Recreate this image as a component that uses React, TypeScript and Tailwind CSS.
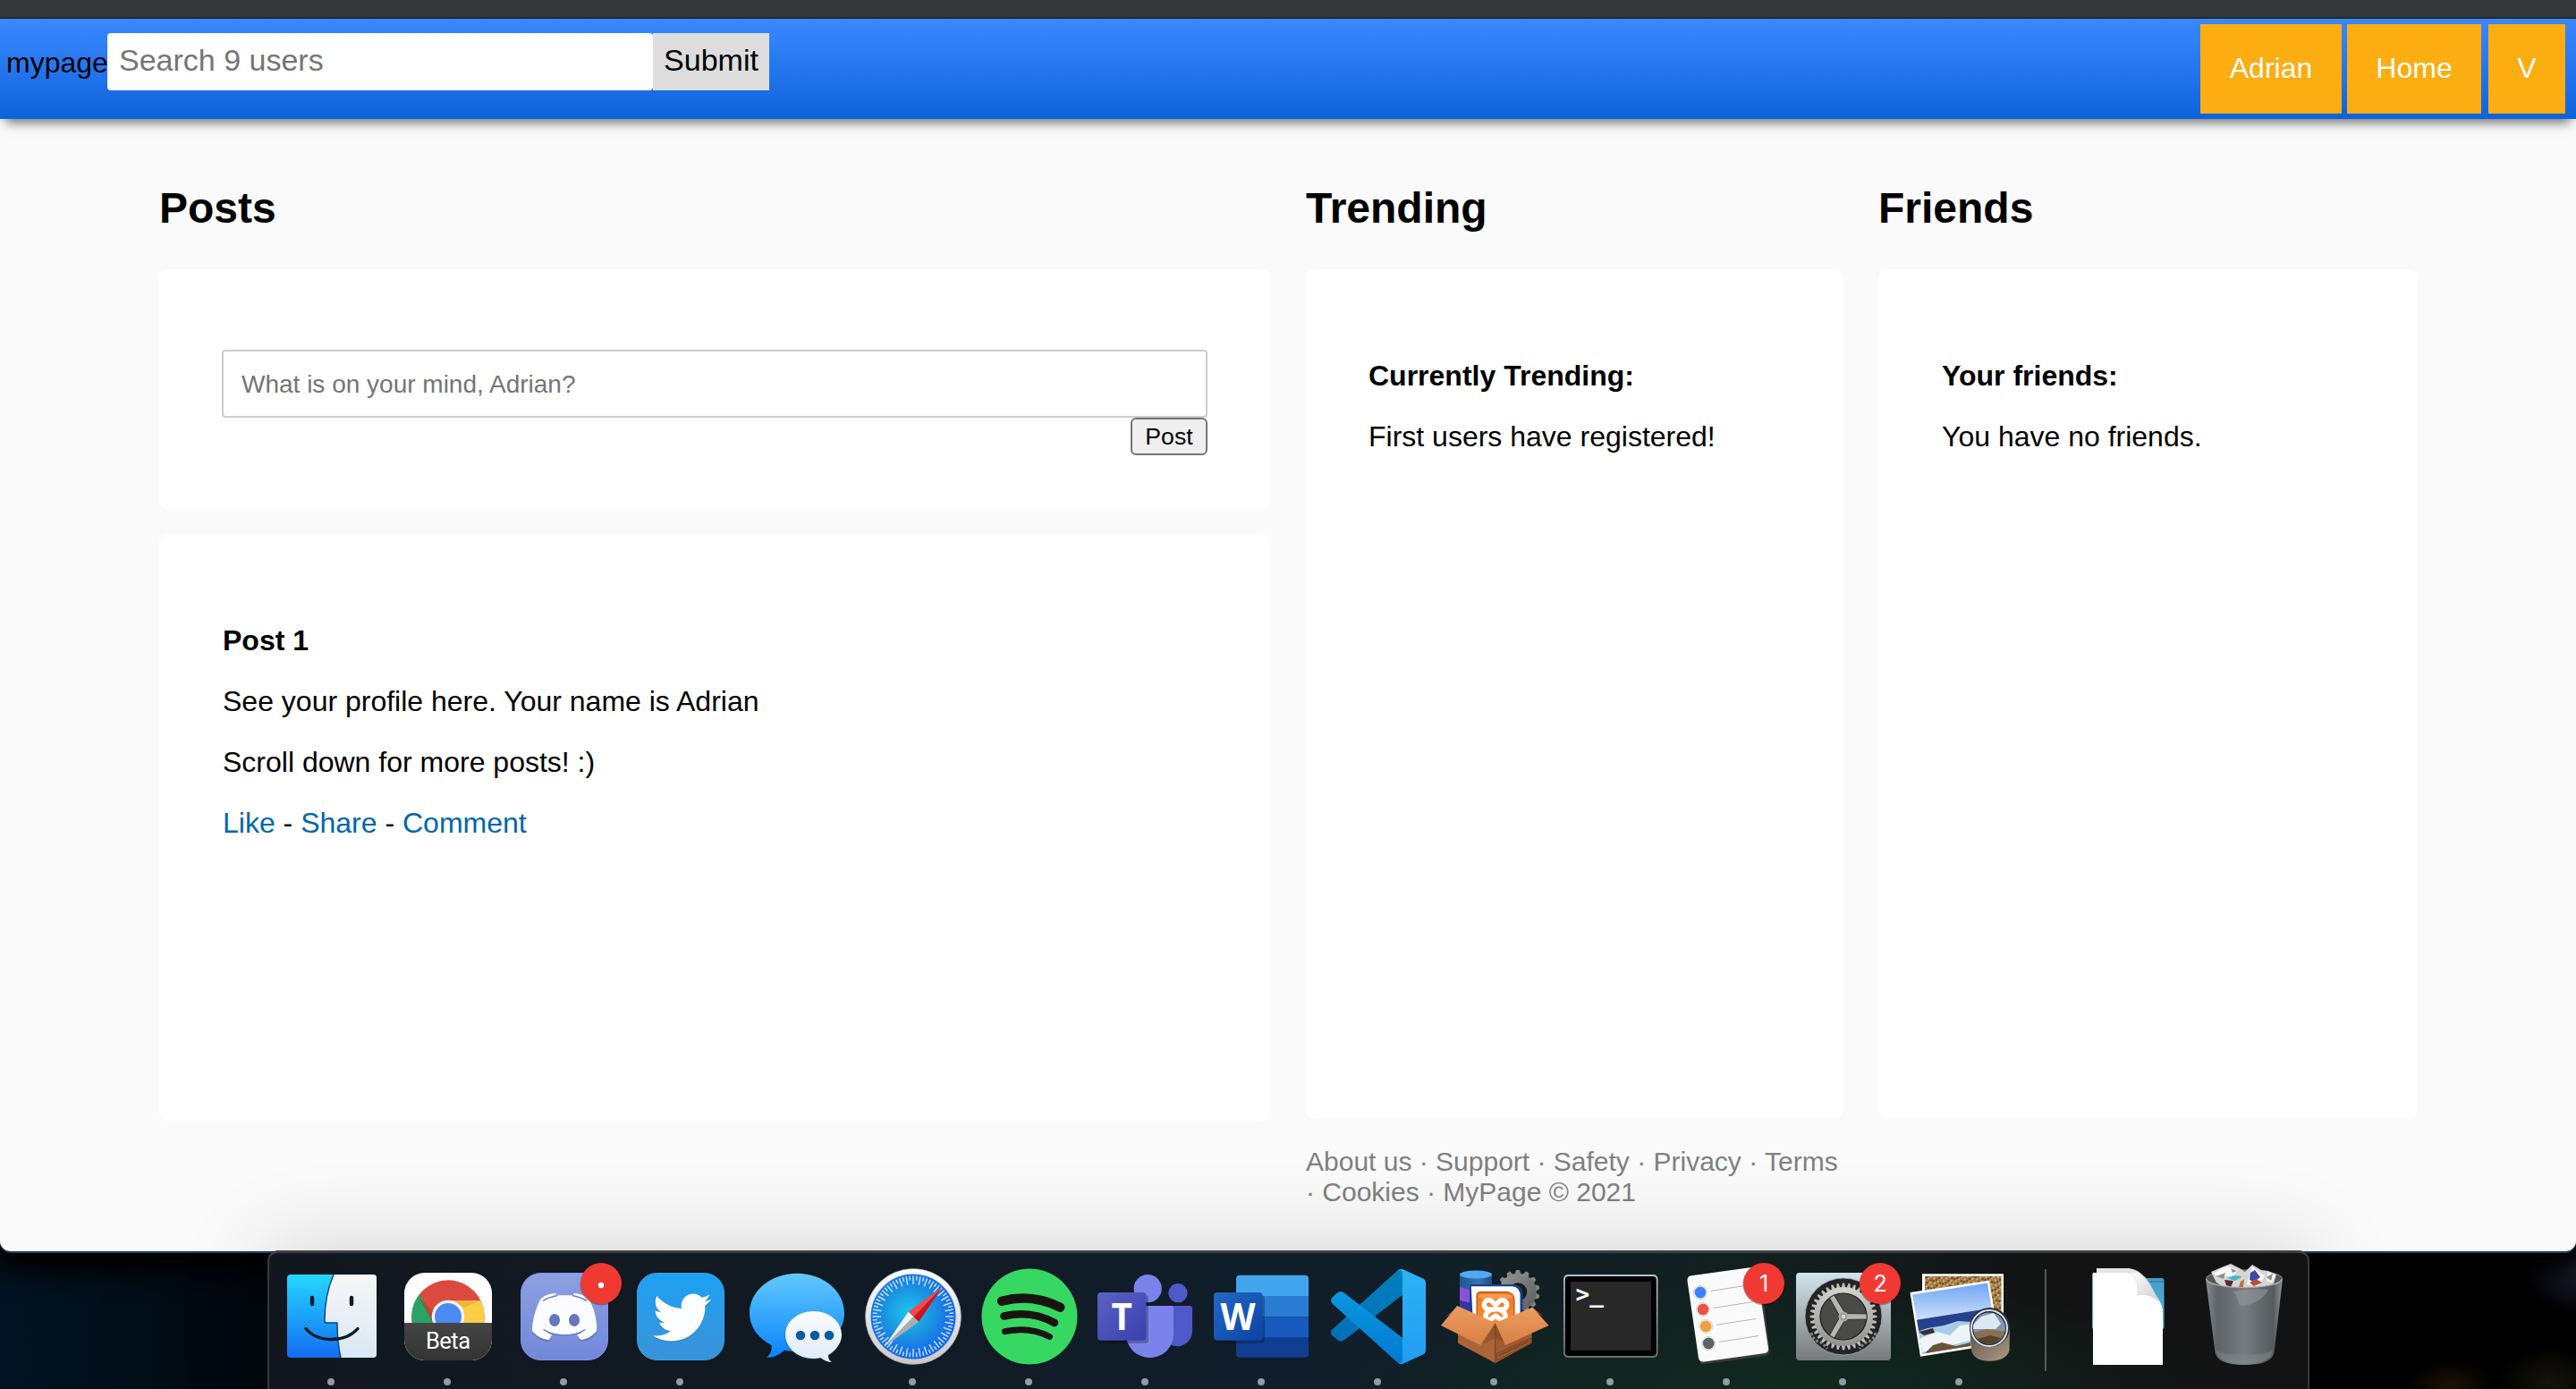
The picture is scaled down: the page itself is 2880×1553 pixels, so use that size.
import type { ReactNode } from "react";
import { FaTwitter } from "react-icons/fa";

const SANS = "font-['Liberation_Sans',Arial,sans-serif]";

function Heading({ children }: { children: ReactNode }) {
  return <h2 className="h-[54px] pt-px text-[48px] leading-[54px] font-bold">{children}</h2>;
}

function Card({ className, children }: { className: string; children: ReactNode }) {
  return <section className={`rounded-[10px] bg-white px-[70px] ${className}`}>{children}</section>;
}

function NavButton({ children, className = "" }: { children: ReactNode; className?: string }) {
  return (
    <a className={`flex h-[100px] items-center justify-center bg-[#fbad12] pb-[2px] text-[32px] leading-9 text-white ${className}`}>
      {children}
    </a>
  );
}

function Header() {
  return (
    <header className="relative z-10 flex h-[112px] shrink-0 items-start justify-between bg-linear-to-b from-[#3988ff] to-[#0b63dc] shadow-[0_10px_12px_-6px_rgba(0,0,0,0.55)]">
      <div className="flex pt-4 pl-[7px]">
        <span className="w-[113px] pt-[15px] text-[32px] leading-9">mypage</span>
        <input
          className="h-16 w-[610px] rounded-[4px] bg-white pr-3 pb-1 pl-[13px] text-[34px] text-black outline-none placeholder:text-[#757575]"
          placeholder="Search 9 users"
        />
        <button className="h-16 w-[130px] bg-[#dddddd] pb-1 text-[34px]">Submit</button>
      </div>
      <nav className="flex pt-[6px] pr-3">
        <NavButton className="mr-[6px] w-[158px]">Adrian</NavButton>
        <NavButton className="mr-2 w-[150px]">Home</NavButton>
        <NavButton className="w-[86px]">V</NavButton>
      </nav>
    </header>
  );
}

function Page() {
  return (
    <main className="flex flex-1 bg-[#fafafa] pt-[72px] pl-[178px] text-[32px] leading-9 text-black">
      <div className="w-[1242px]">
        <Heading>Posts</Heading>
        <Card className="mt-[42px] h-[268px] pt-[90px]">
          <input
            className="block h-[76px] w-[1102px] rounded-[4px] border-2 border-[#cccccc] pt-[2px] pl-5 text-[28px] text-black outline-none placeholder:text-[#757575]"
            placeholder="What is on your mind, Adrian?"
          />
          <button className="ml-auto block h-[42px] w-[86px] rounded-[6px] border-2 border-[#767676] bg-[#efefef] text-[26.67px] leading-[30px]">
            Post
          </button>
        </Card>
        <Card className="mt-7 flex h-[656px] flex-col gap-8 pt-[101px]">
          <h3 className="pl-px font-bold">Post 1</h3>
          <p className="pl-px">See your profile here. Your name is Adrian</p>
          <p className="pl-px">Scroll down for more posts! :)</p>
          <p className="pl-px">
            <a className="text-[#0066ad]">Like</a> - <a className="text-[#0066ad]">Share</a> -{" "}
            <a className="text-[#0066ad]">Comment</a>
          </p>
        </Card>
      </div>
      <div className="ml-10 w-[600px]">
        <Heading>Trending</Heading>
        <Card className="mt-[42px] flex h-[950px] flex-col gap-8 pt-[101px]">
          <h3 className="font-bold">Currently Trending:</h3>
          <p>First users have registered!</p>
        </Card>
        <footer className="mt-[31px] text-[30px] leading-[34px] whitespace-nowrap text-[#808080]">
          About us · Support · Safety · Privacy · Terms
          <br />· Cookies · MyPage © 2021
        </footer>
      </div>
      <div className="ml-10 w-[602px]">
        <Heading>Friends</Heading>
        <Card className="mt-[42px] flex h-[950px] flex-col gap-8 pt-[101px]">
          <h3 className="pl-px font-bold">Your friends:</h3>
          <p className="pl-px">You have no friends.</p>
        </Card>
      </div>
    </main>
  );
}

function Slot({ children, running = true }: { children: ReactNode; running?: boolean }) {
  return (
    <svg className="h-[155px] w-[130px] shrink-0 overflow-visible" viewBox="0 0 130 155">
      {children}
      {running && <circle cx="65" cy="147" r="4" fill="#919ba2" />}
    </svg>
  );
}

function Badge({ label }: { label?: string }) {
  return (
    <g>
      <circle cx="107" cy="38" r="23.5" fill="#000" opacity="0.3" />
      <circle cx="107" cy="37" r="23" fill="#f13934" />
      {label ? (
        <text x="107" y="46" textAnchor="middle" fontSize="25" fill="#fff" fontFamily="Inter, sans-serif">
          {label}
        </text>
      ) : (
        <circle cx="107" cy="39" r="3.2" fill="#fff" />
      )}
    </g>
  );
}

function Gradient({ id, from, to, diagonal }: { id: string; from: string; to: string; diagonal?: boolean }) {
  return (
    <linearGradient id={id} x1="0" y1="0" x2={diagonal ? "1" : "0"} y2="1">
      <stop offset="0" stopColor={from} />
      <stop offset="1" stopColor={to} />
    </linearGradient>
  );
}

function Finder() {
  return (
    <Slot>
      <defs>
        <Gradient id="finder-l" from="#25d7ff" to="#136df2" />
        <Gradient id="finder-r" from="#f7f6f6" to="#d9e7f5" />
        <clipPath id="finder-c">
          <rect x="16" y="27" width="100" height="93" rx="4" />
        </clipPath>
      </defs>
      <g clipPath="url(#finder-c)">
        <rect x="16" y="27" width="100" height="93" fill="url(#finder-l)" />
        <path d="M68 27C61 43 58 63 58 79q0 2 2 2h12c0 13 1 26 4 39h42V27z" fill="url(#finder-r)" />
        <path d="M68 27C61 43 58 63 58 79q0 2 2 2h12c0 13 1 26 4 39" fill="none" stroke="#0a4470" strokeWidth="1.4" />
      </g>
      <path d="M44 53v7M88 53v7" stroke="#0b1c26" strokeWidth="4.4" strokeLinecap="round" />
      <path d="M37 87.500C50 103.500 81 103.500 95 87.500" fill="none" stroke="#0b1826" strokeWidth="3.400" strokeLinecap="round" />
    </Slot>
  );
}

function Chrome() {
  return (
    <Slot>
      <defs>
        <clipPath id="chrome-c">
          <rect x="17" y="25" width="98" height="56" />
        </clipPath>
        <clipPath id="chrome-o">
          <circle cx="66" cy="74" r="40.700" />
        </clipPath>
        <Gradient id="chrome-b" from="#454545" to="#333333" />
      </defs>
      <rect x="17" y="25" width="98" height="98" rx="23" fill="#fff" />
      <g clipPath="url(#chrome-c)">
        <g clipPath="url(#chrome-o)">
          <rect x="20" y="30" width="92" height="92" fill="#db4a3f" />
          <path d="M20 30H25L50 83V120H20z" fill="#2ba364" />
          <path d="M20 36L33 52L50 84H20z" fill="#2ba364" />
          <path d="M66 56H110V120H50V83z" fill="#ffcd46" />
          <path d="M66 56H102L84 64z" fill="#c98b2c" opacity="0.35" />
          <path d="M33 52L50 83L49 68z" fill="#8d2b25" opacity="0.3" />
        </g>
        <circle cx="66" cy="74" r="18.300" fill="#f2f2f2" />
        <circle cx="66" cy="74" r="15" fill="#4a8af5" />
      </g>
      <path d="M17 81H115V100A23 23 0 0 1 92 123H40A23 23 0 0 1 17 100z" fill="url(#chrome-b)" />
      <text x="66" y="110" fontSize="25.500" textAnchor="middle" textLength="50" fill="#fff" fontFamily="Roboto, sans-serif">
        Beta
      </text>
    </Slot>
  );
}

function Discord() {
  return (
    <Slot>
      <defs>
        <Gradient id="discord" from="#8c9fe0" to="#7289da" />
      </defs>
      <rect x="17.500" y="25.500" width="97" height="97" rx="22" fill="url(#discord)" stroke="#7f93ee" />
      <path
        d="M40 58C50 50 83 50 93 58C99 68 103 80 102 93C97 98 91 102 84 102L80 96L89 90C77 97 56 97 43 90L52 96L49 102C41 102 35 98 30 93C30 80 34 68 40 58z"
        fill="#45528f"
        opacity="0.35"
      />
      <path
        d="M39 55C42 51 50 48 56 48L58 50.500C63 50 69 50 75 50.500L77 48C83 48 91 51 94 55C99 65 103 78 102 90C97 96 91 99.500 84 100L80 94.500C84 93 87 91 89 88C77 96.500 56 96.500 43 88C45 91 48 93 52 94.500L49 100C41 99.500 35 96 30 90C30 78 34 65 39 55z"
        fill="#fbfcff"
      />
      <path d="M42 56.500C47 53 51 52 58 50.500M91 56.500C86 53 82 52 75 50.500M42.500 88.500C56 97 77 97 89.500 88.500" fill="none" stroke="#6a7dc6" strokeWidth="1.400" />
      <ellipse cx="55" cy="78" rx="6" ry="6.900" fill="#6477bd" />
      <ellipse cx="77" cy="78" rx="6" ry="6.900" fill="#6477bd" />
      <Badge />
    </Slot>
  );
}

function Twitter() {
  return (
    <Slot>
      <defs>
        <Gradient id="twitter" from="#1da1f2" to="#3a92d9" />
      </defs>
      <rect x="17.500" y="25.500" width="97" height="97" rx="22" fill="url(#twitter)" stroke="#37a0e6" />
      <FaTwitter x={35} y={44} size={65} color="#1e6ea8" opacity={0.4} />
      <FaTwitter x={35} y={42.5} size={65} color="#fcfdff" />
    </Slot>
  );
}

function Messages() {
  return (
    <Slot running={false}>
      <defs>
        <Gradient id="msg-a" from="#62c9fb" to="#0a84ff" />
        <Gradient id="msg-b" from="#fbfdff" to="#dceaf6" />
      </defs>
      <path
        d="M66 25.700C95 25.700 119 45 119 70C119 95 95 113 66 113C61 113 56 112.500 52 111.500C46 117 40 120 32 120C37 115 38 112 37.500 106C22 98 13 85 13 70C13 45 37 25.700 66 25.700z"
        fill="url(#msg-a)"
      />
      <ellipse cx="84" cy="96" rx="32" ry="26.500" fill="#04477f" opacity="0.3" />
      <path
        d="M84.500 68C102 68 116 79.500 116 94.500C116 103 110 112 101 117C101 121 102 123 105 125C98 124.500 95 122 92.500 120C90 120.700 87 121 84.500 121C67 121 53 109 53 94.500C53 79.500 67 68 84.500 68z"
        fill="url(#msg-b)"
      />
      <g fill="#0b5aa6">
        <circle cx="70" cy="95" r="5.300" />
        <circle cx="86" cy="95" r="5.300" />
        <circle cx="102" cy="95" r="5.300" />
      </g>
    </Slot>
  );
}

function Safari() {
  return (
    <Slot>
      <defs>
        <radialGradient id="safari" cx="0.45" cy="0.45" r="0.55">
          <stop offset="0" stopColor="#18c8ee" />
          <stop offset="0.5" stopColor="#1c95e0" />
          <stop offset="1" stopColor="#1164f0" />
        </radialGradient>
        <Gradient id="safari-r" from="#ffffff" to="#c9c9c9" />
      </defs>
      <circle cx="66" cy="74" r="53.500" fill="url(#safari-r)" stroke="#8f979c" strokeWidth="0.600" />
      <circle cx="66" cy="74" r="47.500" fill="url(#safari)" />
      {Array.from({ length: 72 }, (_, i) => (
        <path
          key={i}
          d={i % 2 ? "M66 28.500V33.500" : "M66 28.500V38"}
          stroke="#e6f3fb"
          strokeWidth="1.500"
          opacity="0.85"
          transform={`rotate(${i * 5} 66 74)`}
        />
      ))}
      <path d="M98.600 41L72.200 79.700L66.300 74.200z" fill="#d3101b" />
      <path d="M98.600 41L60.400 68.700L66.300 74.200z" fill="#fb4746" />
      <path d="M33.700 107.700L60.400 68.700L66.300 74.200z" fill="#f1f1f1" />
      <path d="M33.700 107.700L72.200 79.700L66.300 74.200z" fill="#adadad" />
    </Slot>
  );
}

function Spotify() {
  return (
    <Slot>
      <circle cx="66" cy="74" r="53.500" fill="#37d862" />
      <g fill="none" stroke="#191414" strokeLinecap="round">
        <path d="M35 56.700C57 51 80 53.500 100.300 63.700" strokeWidth="10.400" />
        <path d="M37.500 73.500C57 69 77 71.500 94 81" strokeWidth="8.600" />
        <path d="M38.500 90.700C56 87 73 88.500 88.500 96.500" strokeWidth="7" />
      </g>
    </Slot>
  );
}

function AppTile({ id, from, to, letter }: { id: string; from: string; to: string; letter: string }) {
  return (
    <g>
      <defs>
        <Gradient id={id} from={from} to={to} diagonal />
      </defs>
      <rect x="13" y="50" width="56" height="54" rx="4" fill="#000" opacity="0.25" />
      <rect x="12" y="47" width="54.500" height="53.700" rx="4" fill={`url(#${id})`} />
      <text x="39.200" y="88.500" textAnchor="middle" fontSize="40.500" fontWeight="bold" fill="#fff" fontFamily="'Open Sans', sans-serif">
        {letter}
      </text>
    </g>
  );
}

function Teams() {
  return (
    <Slot>
      <circle cx="102" cy="47.700" r="10.600" fill="#5059c9" />
      <path d="M86 62H115Q118 62 118 65V90A16.500 17 0 0 1 86 96z" fill="#5059c9" />
      <circle cx="68.200" cy="42.700" r="15.600" fill="#7b83eb" />
      <path d="M44 62H94Q97 62 97 65V94A26.500 26 0 0 1 44 94z" fill="#7b83eb" />
      <AppTile id="teams" from="#5a62c3" to="#3940ab" letter="T" />
    </Slot>
  );
}

function Word() {
  return (
    <Slot>
      <defs>
        <clipPath id="word-c">
          <rect x="37" y="27.700" width="81" height="92" rx="4" />
        </clipPath>
      </defs>
      <g clipPath="url(#word-c)">
        <rect x="37" y="27" width="81" height="24" fill="#41a5ee" />
        <rect x="37" y="51" width="81" height="23.300" fill="#2b7cd3" />
        <rect x="37" y="74.300" width="81" height="23.400" fill="#185abd" />
        <rect x="37" y="97.700" width="81" height="23" fill="#103f91" />
      </g>
      <AppTile id="word" from="#2368c4" to="#0b44a5" letter="W" />
    </Slot>
  );
}

function VsCode() {
  return (
    <Slot>
      <defs>
        <Gradient id="vs-r" from="#2bb3f3" to="#239cf2" />
        <Gradient id="vs-a" from="#0a97dd" to="#0078d4" />
        <Gradient id="vs-b" from="#0280bd" to="#0070b8" />
      </defs>
      <path d="M87 23Q90 20 93 21V49.700L29 99.500Q23.500 104 19 99L14 95Q11 91 15 88z" fill="url(#vs-b)" />
      <path d="M15 60Q11 56 15 52L19.500 48Q23.500 44 29 48.500L93 97.700V127Q90 128 87 125z" fill="url(#vs-a)" />
      <path d="M88 22.500Q91 20 94 21.500L116 31.500Q119 33 119 36.500V111.500Q119 115 116 116.500L94 126.500Q91 128 88 125.500Q93 127 93 122V26Q93 21 88 22.500z" fill="url(#vs-r)" />
    </Slot>
  );
}

function Teeth({ count, cx, cy, r, size, fill }: { count: number; cx: number; cy: number; r: number; size: number; fill: string }) {
  return (
    <g fill={fill}>
      {Array.from({ length: count }, (_, i) => (
        <path
          key={i}
          d={`M${cx - size} ${cy - r + 5}L${cx - size / 2} ${cy - r}H${cx + size / 2}L${cx + size} ${cy - r + 5}z`}
          transform={`rotate(${(i * 360) / count} ${cx} ${cy})`}
        />
      ))}
    </g>
  );
}

function Xampp() {
  return (
    <Slot>
      <defs>
        <Gradient id="xa-l" from="#eb9c5f" to="#d98046" />
        <Gradient id="xa-g" from="#8f8f8f" to="#606161" diagonal />
        <Gradient id="xa-o" from="#f07618" to="#ff8e2a" />
        <linearGradient id="xa-c">
          <stop offset="0" stopColor="#1f568f" />
          <stop offset="0.6" stopColor="#3178b4" />
          <stop offset="1" stopColor="#1d4d80" />
        </linearGradient>
      </defs>
      <path d="M27 27H63V80H27z" fill="url(#xa-c)" />
      <path d="M27 41Q45 48 63 41V56Q45 62 27 56z" fill="#8c4fd8" />
      <path d="M27 56Q45 62 63 56V80H27z" fill="#3436a0" />
      <ellipse cx="45" cy="27" rx="18" ry="4.500" fill="#52a8f2" />
      <Teeth count={14} cx={92} cy={46.5} r={24.5} size={3.8} fill="#838484" />
      <circle cx="92" cy="46.500" r="15.500" fill="none" stroke="url(#xa-g)" strokeWidth="10.500" />
      <path d="M38 38H88Q97.500 39 97.500 50V84H38z" fill="#1c3c8e" />
      <path d="M39.800 40.300H86Q94.500 41 94.500 51V84H42z" fill="#fff" />
      <path d="M46 84V50Q46 46.500 50 46.500H80Q88 47.500 88 55V84z" fill="url(#xa-o)" stroke="#9a4a14" />
      <path d="M50 49H80Q85 50 86 53Q68 56 48 53Q48 50 50 49z" fill="#ffb070" opacity="0.6" />
      <path
        d="M66.500 66H59.500A5.200 5.200 0 1 1 63.500 57.500L67 61L70.500 57.500A5.200 5.200 0 1 1 75 66H70M60 67.500A6.500 6.500 0 0 0 59 79L67 73L75 79A6.500 6.500 0 0 0 74 67.500"
        fill="none"
        stroke="#fff"
        strokeWidth="5.500"
        strokeLinejoin="round"
        strokeLinecap="round"
      />
      <path d="M11 74L27 62L30 66zM121 74L108 63L105 66z" fill="#7c4020" />
      <path d="M25 88L66.700 81V126L25 103.700z" fill="#ab6436" />
      <path d="M107.500 88L66.700 81V126L107.500 103.700z" fill="#a05b31" />
      <path d="M66.700 82V126" stroke="#713b1c" strokeWidth="0.800" />
      <path d="M66.700 81L82 105L66.700 98L52 105z" fill="#7c4422" opacity="0.45" />
      <path d="M24 62L66.700 81L50 106L6 84z" fill="url(#xa-l)" />
      <path d="M108.500 63.700L126.500 84L78 106L66.700 81z" fill="url(#xa-l)" />
      <path d="M68.500 115.500L106.500 98V104L68.500 123z" fill="none" stroke="#6f3d20" strokeWidth="0.900" />
      <path d="M71 117.500L104 101.500" stroke="#6f3d20" strokeWidth="2.500" strokeDasharray="1.500 1" />
    </Slot>
  );
}

function Terminal() {
  return (
    <Slot>
      <defs>
        <Gradient id="term" from="#b3c3ca" to="#6d6f70" />
      </defs>
      <rect x="13" y="27" width="105.500" height="93" rx="5" fill="url(#term)" />
      <rect x="14.800" y="29" width="102" height="89" rx="4" fill="#000" />
      <rect x="21" y="35" width="90" height="77" fill="#282828" />
      <text x="26.500" y="57.500" fontSize="26" fontWeight="bold" fill="#fff" fontFamily="'DejaVu Sans Mono', monospace">
        &gt;_
      </text>
    </Slot>
  );
}

function Reminders() {
  const dots = ["#3a82f7", "#e9524a", "#f0a13c", "#5d626b"];
  return (
    <Slot>
      <path d="M24 34L98 22Q102 21 103 25L113.500 112Q114 117 109 118L41 127Q36 128 35 123z" fill="#3a3a3a" />
      <path d="M26 28.300L93 19Q98 18.500 99 23L112 109Q113 114 108 115L40 124.500Q35 125 34 120.500L21.500 34Q21 29 26 28.300z" fill="#fafafa" />
      {dots.map((color, i) => (
        <g key={color} transform={`translate(${i * 3.05} ${i * 19})`}>
          <circle cx="36" cy="47" r="7.600" fill="#fff" stroke="#cfcfcf" strokeWidth="0.900" />
          <circle cx="36" cy="47" r="6.400" fill={color} />
          <path d="M47.500 45.500L92 38.500" stroke="#b4b4b4" strokeWidth="1" />
        </g>
      ))}
      <Badge label="1" />
    </Slot>
  );
}

function Preferences() {
  return (
    <Slot>
      <defs>
        <Gradient id="pref" from="#d2e4ec" to="#77797b" />
        <Gradient id="pref-g" from="#d0d0cc" to="#94938f" />
      </defs>
      <rect x="13" y="25" width="106" height="98" rx="4" fill="url(#pref)" />
      <circle cx="66" cy="74" r="43" fill="#242424" stroke="#9fb0bb" strokeWidth="0.800" />
      <g transform="translate(66 74)" fill="none" stroke="#8b8b88" strokeWidth="3" opacity="0.9">
        <path d="M-36 18Q-34 26 -28 28T-18 36M36 18Q34 26 28 28T18 36" strokeDasharray="3 2" />
      </g>
      <Teeth count={36} cx={66} cy={74} r={37.5} size={2.1} fill="#bcbcb8" />
      <circle cx="66" cy="74" r="29.500" fill="#4a4a49" stroke="url(#pref-g)" strokeWidth="7" />
      <circle cx="66" cy="74" r="26" fill="none" stroke="#1b1b1b" strokeWidth="1.200" />
      {[0, 120, 240].map((angle) => (
        <path key={angle} d="M66 70.500L92 71V77L66 77.500z" fill="#b5b5b1" stroke="#222" strokeWidth="0.800" transform={`rotate(${angle} 66 74)`} />
      ))}
      <circle cx="66" cy="74" r="5.500" fill="#aaaaa7" />
      <circle cx="66" cy="74" r="3" fill="#d4d4d2" stroke="#7a7a78" strokeWidth="0.800" />
      <Badge label="2" />
    </Slot>
  );
}

function Preview() {
  return (
    <Slot>
      <defs>
        <pattern id="sand" width="11" height="9" patternUnits="userSpaceOnUse" patternTransform="rotate(17)">
          <rect width="11" height="9" fill="#a37c45" />
          <path d="M0 1H2M5 3H7M2 6H4M8 7H10M7 0H9" stroke="#e0c58e" strokeWidth="1.600" />
          <path d="M3 2H5M0 4H2M8 4H10M5 8H7" stroke="#4e3617" strokeWidth="1.600" />
        </pattern>
        <Gradient id="pv-sky" from="#6ea5f4" to="#d2e4fc" />
        <Gradient id="pv-body" from="#55504b" to="#b09b84" diagonal />
        <clipPath id="pv-c">
          <path d="M13 49.500L97 36.500L108 102L24.500 115.500z" />
        </clipPath>
        <clipPath id="pv-l">
          <ellipse cx="99" cy="87" rx="18" ry="17.500" />
        </clipPath>
      </defs>
      <rect x="24" y="26.300" width="91" height="60" fill="#fff" />
      <rect x="27" y="28.800" width="85.500" height="58" fill="url(#sand)" />
      <path d="M10.500 47L99 33.700L111 104.500L22 118.700z" fill="#fff" />
      <g clipPath="url(#pv-c)">
        <rect x="8" y="36" width="104" height="44" fill="url(#pv-sky)" />
        <path d="M10 79L105 64V120H10z" fill="#26408f" />
        <path d="M15 92L30 87L48 84L64 79L80 80L90 70L108 74V120H15z" fill="#a9cbe4" />
        <path d="M18 100L40 91L55 95L66 84L84 82L80 100L50 108L22 114z" fill="#edf5fa" />
        <path d="M20 91L36 87L38 92L26 95zM80 72L92 69L94 75L84 76z" fill="#3a3033" />
        <path d="M26 116L36 106L46 103L62 107L78 103V116z" fill="#6b5338" />
      </g>
      <path d="M77 86L79 112Q82 123.700 99 123.700Q118 123.700 121.500 112L122 86z" fill="url(#pv-body)" />
      <ellipse cx="99.500" cy="86" rx="22.500" ry="22" fill="#2b3036" />
      <ellipse cx="99" cy="87" rx="20" ry="20" fill="#20242a" stroke="#dbe3ec" strokeWidth="2" />
      <g clipPath="url(#pv-l)">
        <rect x="80" y="68" width="40" height="38" fill="#7f94ae" />
        <path d="M80 84L90 74L104 70L112 82L106 88H80z" fill="#dde8f2" />
        <path d="M81 92L96 88L118 91V106H81z" fill="#8a7050" />
        <path d="M86 99L100 95L112 98L104 105H90z" fill="#54422e" />
      </g>
    </Slot>
  );
}

function Documents() {
  return (
    <Slot running={false}>
      <defs>
        <Gradient id="doc-fold" from="#ffffff" to="#cfcfcf" diagonal />
        <Gradient id="doc-b" from="#3f9cc4" to="#5fbbe6" />
      </defs>
      <rect x="25" y="25" width="10" height="63" rx="2" fill="#5db4de" />
      <path d="M80 31H103Q105.500 31 105.500 34V86Q105.500 88 103 88H80z" fill="url(#doc-b)" />
      <path d="M84 35H105.500" stroke="#2d7299" />
      <path d="M30 20H66C76 21 84 28 90 38L99 56Q104 62 104 70V90H30z" fill="#e4e4e4" />
      <path d="M26 25H64C74 25 79 30 82 37C91 43 104 56 104 70V128H26z" fill="#fff" />
      <path d="M66 25C76 30 76 40 76 49.500C84 49 93 50 99 57C94 46 86 30 76 24z" fill="url(#doc-fold)" stroke="#d5d5d5" strokeWidth="0.600" />
    </Slot>
  );
}

function Trash() {
  return (
    <Slot running={false}>
      <defs>
        <linearGradient id="trash" x1="0" x2="1" y1="0" y2="0">
          <stop offset="0" stopColor="#888c8f" />
          <stop offset="0.15" stopColor="#5e6367" />
          <stop offset="0.5" stopColor="#777c80" />
          <stop offset="0.88" stopColor="#555a5d" />
          <stop offset="1" stopColor="#8f9497" />
        </linearGradient>
        <Gradient id="trash-b" from="#777b7e" to="#8c9093" />
      </defs>
      <ellipse cx="65" cy="31.500" rx="42.500" ry="9.500" fill="#54585b" stroke="#8b8f91" />
      <path d="M28 24L42 18L50 15L60 20L66 24L74 16L84 22L92 23L101 27L98 37L84 42H44L34 36z" fill="#d6d6d6" />
      <path d="M30 26L40 20L48 18L58 22L54 28L38 30zM68 38L74 18L88 29L80 40zM92 24L100 28L96 36L90 34z" fill="#f8f8f8" />
      <path d="M46 31L55 28L61 30L55 34z" fill="#3bb7e2" />
      <path d="M56 28L62 29L60 32z" fill="#6ac43a" />
      <path d="M43 33L53 34L50 41L45 39z" fill="#5a2b2e" />
      <path d="M72 25L77 22L83 30L76 35L71 33z" fill="#3b4aa0" />
      <path d="M71 36L78 32L85 36L76 40z" fill="#b8532e" />
      <path d="M61 35L65 32L64 41L59 41z" fill="#c46d3a" />
      <path d="M34 29L44 25L42 32zM90 30L97 26L95 34zM50 20L57 23L52 25z" fill="#8e8e8e" />
      <path d="M22 32C24 38 42 41.500 65 41.500C88 41.500 106 38 108 32L98.500 114Q96 128 65 128Q35 128 32.500 114z" fill="url(#trash)" />
      <path d="M52 46C64 44 82 42 92 44C88 54 72 62 62 62C56 60 60 52 52 46z" fill="#a0a3a5" opacity="0.45" />
      <path d="M34 112C42 118 88 118 97 112Q94 127 65 127Q37 127 34 112z" fill="url(#trash-b)" opacity="0.6" />
      <path d="M22.500 32C24 38 42 41.500 65 41.500C88 41.500 106 38 107.500 32" fill="none" stroke="#aaaeb0" strokeWidth="1.200" />
    </Slot>
  );
}

function Dock() {
  return (
    <div className="ml-[299px] flex h-[155px] w-[2283px] rounded-t-[12px] bg-[radial-gradient(ellipse_500px_120px_at_1700px_155px,#10291f,transparent),linear-gradient(90deg,#12171f_0%,#111a23_25%,#101e2b_50%,#12201f_72%,#131313_88%,#131313_100%)] pl-[6px] shadow-[inset_0_3px_0_#3e4144,inset_2px_0_0_#34383d,inset_-2px_0_0_#34383d,0_0_100px_rgba(0,0,0,0.17)]">
      <Finder />
      <Chrome />
      <Discord />
      <Twitter />
      <Messages />
      <Safari />
      <Spotify />
      <Teams />
      <Word />
      <VsCode />
      <Xampp />
      <Terminal />
      <Reminders />
      <Preferences />
      <Preview />
      <div className="mt-[21px] mr-[26px] ml-[31px] h-[114px] w-[2px] bg-[#58595a]" />
      <Documents />
      <Trash />
    </div>
  );
}

export default function App() {
  return (
    <div
      className={`flex h-[1553px] w-[2880px] flex-col overflow-hidden bg-[radial-gradient(ellipse_60px_50px_at_2880px_1420px,#1d2233,transparent),radial-gradient(ellipse_50px_30px_at_2740px_1550px,#1b1307,transparent),radial-gradient(ellipse_60px_40px_at_2850px_1545px,#14130a,transparent),linear-gradient(90deg,#011322,#00070d_300px,#000_2600px)] ${SANS}`}
    >
      <div className="flex h-[1400px] shrink-0 flex-col overflow-hidden rounded-b-[12px] border-b border-[#0d3a52] shadow-[0_1px_0_#164e70,0_12px_30px_10px_#000]">
        <div className="h-[21px] shrink-0 border-b-2 border-[#272829] bg-[#35363a]" />
        <Header />
        <Page />
      </div>
      <div className="relative z-10 -mt-[2px]">
        <Dock />
      </div>
    </div>
  );
}
